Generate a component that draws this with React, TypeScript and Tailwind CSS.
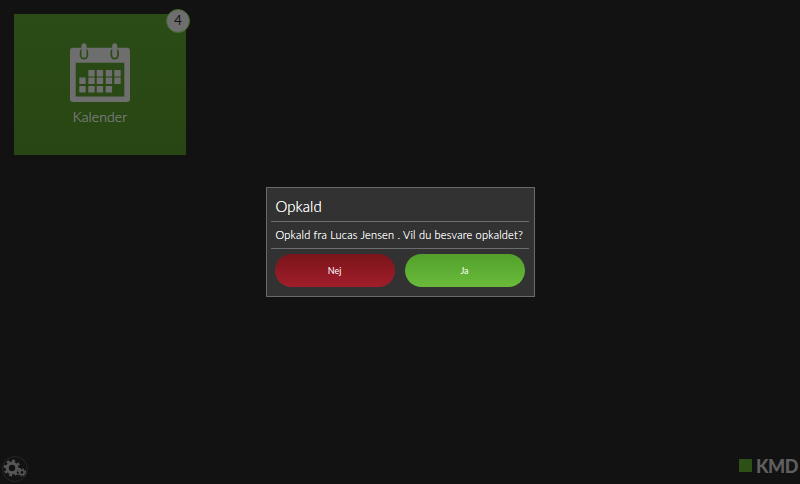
const font = "font-['Lato','Liberation_Sans',sans-serif]";

function CalendarIcon() {
  const rows: [number, number[]][] = [
    [27, [18.3, 26.7, 35.7, 44.3]],
    [34.5, [9.3, 18.3, 26.7, 35.7, 44.3]],
    [43, [9.3, 18.3, 26.7, 35.7]],
  ];
  return (
    <svg width="60" height="59" viewBox="0 0 60 59" className="block">
      <path
        fillRule="evenodd"
        fill="#6e6e6e"
        d="M3 4.7h54a3 3 0 0 1 3 3V56a3 3 0 0 1-3 3H3a3 3 0 0 1-3-3V7.700a3 3 0 0 1 3-3zM5.700 19.700V53.500h48.600V19.700z"
      />
      {[14, 44.7].map((x) => (
        <g key={x}>
          <rect x={x - 4.2} y="5" width="8.400" height="11.500" rx="4.200" fill="#2b4c16" />
          <rect x={x - 2.500} y="0.300" width="5" height="14.500" rx="2.500" fill="#6e6e6e" />
        </g>
      ))}
      {rows.map(([y, xs]) =>
        xs.map((x) => <rect key={`${x}-${y}`} x={x} y={y} width="6.400" height="6.400" rx="0.500" fill="#6e6e6e" />)
      )}
    </svg>
  );
}

function Gears() {
  return (
    <svg width="26" height="26" viewBox="0 0 26 26" className="block">
      <circle cx="13" cy="13" r="12.500" fill="none" stroke="#272727" strokeWidth="1" />
      <circle cx="10" cy="12" r="4.800" fill="none" stroke="#565656" strokeWidth="3.200" />
      <circle cx="10" cy="12" r="7.200" fill="none" stroke="#565656" strokeWidth="2.400" strokeDasharray="2.800 2.850" />
      <circle cx="20" cy="16.500" r="2.200" fill="none" stroke="#565656" strokeWidth="1.600" />
      <circle cx="20" cy="16.500" r="3.600" fill="none" stroke="#565656" strokeWidth="1.300" strokeDasharray="1.500 1.330" />
    </svg>
  );
}

export default function App() {
  return (
    <div className={`relative w-[800px] h-[484px] overflow-hidden bg-[#121212] font-light ${font}`}>
      <div className="flex flex-col justify-between h-full">
        <div className="pt-[14px] pl-[14px]">
          <div className="relative w-[172px] h-[141px] bg-[linear-gradient(#2b4c16,#284613)] flex flex-col items-center pt-[29px]">
            <CalendarIcon />
            <div className="mt-[6px] text-[14px] leading-[18px] tracking-[0.1px] text-[#7c7c7c] [text-shadow:0_0_0.5px_#7c7c7c]">Kalender</div>
            <div className="absolute -top-[5px] -right-[4px] w-[24px] h-[24px] rounded-full bg-[#6e6e6e] border border-[#3f6a25] flex items-center justify-center text-[13px] font-normal text-[#121212]">
              4
            </div>
          </div>
        </div>
        <div className="flex items-center justify-between pl-[2px] pr-[2px] pb-[2px]">
          <Gears />
          <div className="flex items-center gap-[4px] mb-[7px]">
            <div className="w-[13px] h-[13px] bg-[#2d5016]" />
            <div className="w-[42px] text-[18px] leading-[14px] font-black text-[#5f5f5f] tracking-[-0.4px]">KMD</div>
          </div>
        </div>
      </div>
      <div className="absolute inset-0 flex items-center justify-center">
        <div className="w-[269px] h-[110px] bg-[#323232] border border-[#6a6a6a] pl-[4px] pr-[5px] flex flex-col text-white [text-shadow:0_0_0.6px_#ffffff]">
          <div className="h-[34px] flex items-center px-[5px] pt-[4px] text-[15px] tracking-[0.05px] border-b border-[#6d6d6d]">Opkald</div>
          <div className="h-[27px] flex items-center px-[5px] text-[11px] tracking-[0.2px] whitespace-nowrap border-b border-[#6d6d6d]">
            Opkald fra Lucas Jensen . Vil du besvare opkaldet?
          </div>
          <div className="flex gap-[10px] px-[4px] pt-[5px]">
            <button className="w-[120px] h-[33px] rounded-full bg-[linear-gradient(#7a141b,#a11e2a)] text-[9px] font-normal text-white">Nej</button>
            <button className="w-[120px] h-[33px] rounded-full bg-[linear-gradient(#52a02b,#6abb3b)] text-[9px] font-normal text-white">Ja</button>
          </div>
        </div>
      </div>
    </div>
  );
}
